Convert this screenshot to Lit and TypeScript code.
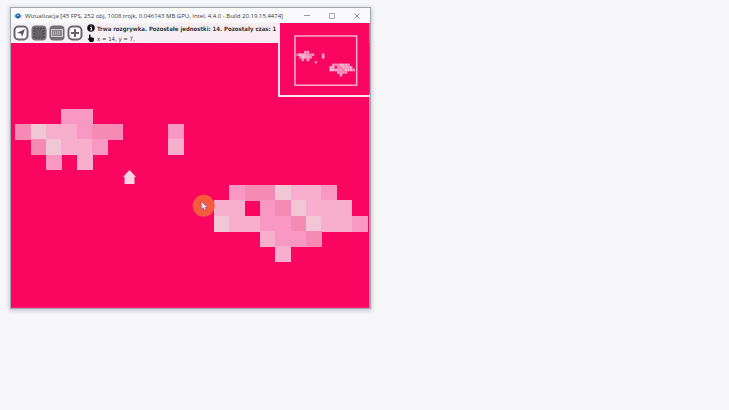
import { LitElement, html, svg, css } from "lit";
import { customElement } from "lit/decorators.js";

type Tile = [col: number, row: number, shade: string];

const GROUND = "#fa0560";
const shades: Record<string, string> = {
  a: "#f58ab5",
  b: "#f998c3",
  c: "#f8aecd",
  d: "#efc7d5",
};

/* One character per tile; a dot is open ground. */
const rows = [
  "...bb..................",
  "adccbaa...b............",
  ".adccb....c............",
  "..b.c..................",
  ".......................",
  "..............baadccb..",
  ".............cc.badccc.",
  ".............dccbbadccb",
  "................cbba...",
  ".................c.....",
];

const tiles: Tile[] = rows.flatMap((line, row) =>
  [...line].flatMap((key, col): Tile[] => (key === "." ? [] : [[col, row, shades[key]]])),
);

const drawTiles = () =>
  tiles.map(([x, y, fill]) => svg`<rect x=${x} y=${y} width="1.04" height="1.04" fill=${fill} />`);

@customElement("map-view")
export class MapView extends LitElement {
  static styles = css`
    :host { display: block; }
    .map { display: block; width: 100%; height: auto; }
  `;
  render() {
    return html`<svg class="map" viewBox="0 0 360 266" role="img" aria-label="Mapa">
      <rect width="360" height="266" fill=${GROUND} />
      <g transform="translate(4.5 66) scale(15.35)" shape-rendering="crispEdges">${drawTiles()}</g>
      <path d="M112.500 134.500L119 127.500L125.500 134.500H124V141.500H114V134.500Z" fill="#fbd3e5" />
      <circle cx="193.500" cy="163.500" r="11" fill="#f65c3c" />
      <path d="M191 159V167L193 165.500L194.500 168L196 167L195 165H197.500Z" fill="#f5dcea" stroke="#8a5a8c" stroke-width="0.7" />
    </svg>`;
  }
}

@customElement("mini-map")
export class MiniMap extends LitElement {
  static styles = css`
    :host { display: block; }
    .map { display: block; width: 100%; height: auto; }
  `;
  render() {
    return html`<svg class="map" viewBox="0 0 90 72" role="img" aria-label="Minimapa">
      <rect width="90" height="72" fill=${GROUND} />
      <rect x="15" y="13" width="62" height="49.500" fill="none" stroke="#fcb0d0" stroke-width="1.500" />
      <g transform="translate(16.500 28) scale(2.550)">${drawTiles()}</g>
      <rect x="35" y="38.500" width="2" height="2" fill="#fbaed0" />
    </svg>`;
  }
}

@customElement("app-root")
export class AppRoot extends LitElement {
  static styles = css`
    :host {
      display: block;
      min-height: 100vh;
      box-sizing: border-box;
      padding: 7px 10px;
      background: #f7f7f9;
      font-family: "Open Sans", "Noto Sans", sans-serif;
      font-size: 6px;
      color: #38383c;
    }
    .window {
      position: relative;
      width: calc(50% + 6px);
      box-sizing: border-box;
      border: 1px solid #a2a6ae;
      background: #f8f6f9;
      box-shadow: 0 1px 4px 1px #c9cad6;
    }
    .titlebar { display: flex; align-items: center; height: 15px; background: #fafafc; }
    .eye { width: 8px; height: 8px; margin: 0 3px; }
    .title { flex: 1; margin: 0; font-size: 6px; font-weight: 400; white-space: nowrap; }
    .controls { display: flex; gap: 17px; padding-right: 9px; }
    button { display: block; padding: 0; border: 0; background: none; }
    .controls svg { display: block; width: 8px; height: 8px; }
    .toolbar {
      display: flex;
      align-items: center;
      gap: 2px;
      height: 20px;
      padding-left: 2px;
      background: linear-gradient(90deg, #f4f2f5, #fbe9f0);
    }
    .toolbar svg { display: block; }
    .tool svg { width: 16px; height: 16px; }
    .status { display: grid; gap: 1px; margin-left: 2px; line-height: 9px; font-family: "DejaVu Sans Condensed", "DejaVu Sans", sans-serif; }
    .line { display: flex; align-items: center; gap: 2px; margin: 0; white-space: nowrap; }
    .line svg { width: 8px; height: 8px; }
    .strong { font-weight: 700; }
    .mini {
      position: absolute;
      top: 15px;
      right: 0;
      width: 25%;
      border: solid #fde6f0;
      border-width: 0 0 2px 2px;
    }
  `;

  render() {
    return html`<main class="window">
      <header class="titlebar">
        <svg class="eye" viewBox="0 0 8 8" aria-hidden="true">
          <path d="M0 4Q4 -2 8 4Q4 10 0 4Z" fill="#7da6d2" />
          <circle cx="4" cy="4" r="2" fill="#1c5596" /><circle cx="4" cy="3.500" r="0.8" fill="#cfe4f5" />
        </svg>
        <h1 class="title">Wizualizacja [45 FPS, 252 obj, 1008 trojk, 0.046143 MB GPU, Intel, 4.4.0 - Build 20.19.15.4474]</h1>
        <div class="controls">
          <button aria-label="Minimalizuj"><svg viewBox="0 0 8 8"><path d="M1 3.500H7" stroke="#999" /></svg></button>
          <button aria-label="Maksymalizuj"><svg viewBox="0 0 8 8"><rect x="1.500" y="1.500" width="5" height="5" fill="none" stroke="#999" stroke-width="0.8" /></svg></button>
          <button aria-label="Zamknij"><svg viewBox="0 0 8 8"><path d="M1.500 1.500L6.500 6.500M6.500 1.500L1.500 6.500" stroke="#666" stroke-width="0.8" /></svg></button>
        </div>
      </header>
      <div class="toolbar">
        <button class="tool" aria-label="Nawigacja"><svg viewBox="0 0 16 16">
          <rect x="1.500" y="1.500" width="13" height="13" rx="4" fill="#fff" stroke="#6c696c" stroke-width="2" />
          <path d="M12 4L9 12L8 8.500L4 8Z" fill="#575457" /></svg></button>
        <button class="tool" aria-label="Zaznaczenie"><svg viewBox="0 0 16 16">
          <rect x="0.500" y="0.500" width="15" height="15" rx="4" fill="#777477" />
          <rect x="3" y="3" width="10" height="10" fill="#646164" stroke="#434143" stroke-dasharray="2 1" /></svg></button>
        <button class="tool" aria-label="Klawiatura"><svg viewBox="0 0 16 16">
          <rect x="0.500" y="0.500" width="15" height="15" rx="4" fill="#737073" />
          <rect x="2.500" y="4.500" width="11" height="7" fill="#8a878a" stroke="#cfcccf" />
          <path d="M4 7H12M4 9H12" stroke="#d8d5d8" stroke-dasharray="1 1" /></svg></button>
        <button class="tool" aria-label="Dodaj"><svg viewBox="0 0 16 16">
          <rect x="1.500" y="1.500" width="13" height="13" rx="4" fill="#fff" stroke="#6c696c" stroke-width="2" />
          <path d="M8 4V12M4 8H12" stroke="#656265" stroke-width="2" /></svg></button>
        <div class="status">
          <p class="line strong"><svg viewBox="0 0 8 8" aria-hidden="true"><circle cx="4" cy="4" r="3.800" fill="#111" /><path d="M3 3.500H4.500V6M3 6H5.500M4 1.500V2.500" fill="none" stroke="#fff" stroke-width="0.9" /></svg>Trwa rozgrywka. Pozostałe jednostki: 14. Pozostały czas: 1</p>
          <p class="line"><svg viewBox="0 0 8 8" aria-hidden="true"><path d="M2 0.500H3.500V3L7 4V6.500L6 8H3L0.500 4.500L2 4.500Z" fill="#111" /></svg>x = 14, y = 7,</p>
        </div>
      </div>
      <map-view></map-view>
      <div class="mini"><mini-map></mini-map></div>
    </main>`;
  }
}
